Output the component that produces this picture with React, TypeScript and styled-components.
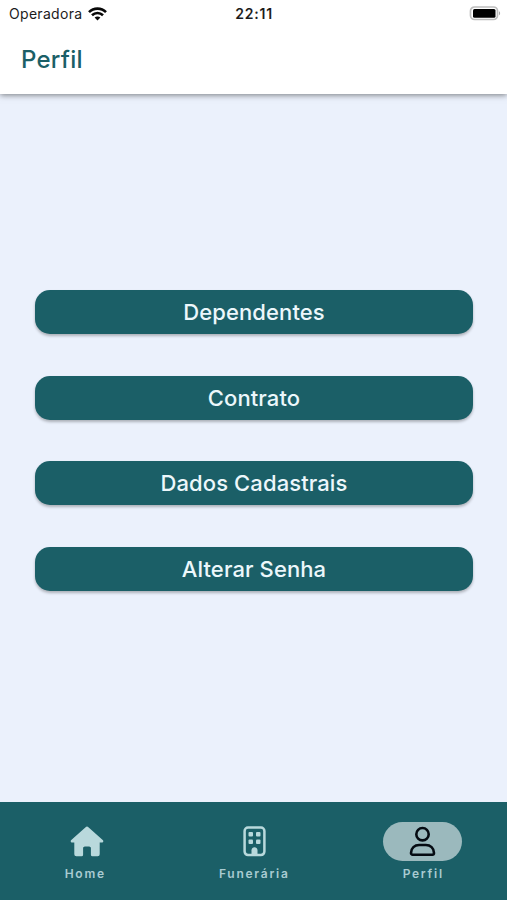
import React from 'react';
import styled, { createGlobalStyle } from 'styled-components';

const GlobalStyle = createGlobalStyle`
  * { box-sizing: border-box; }
  body { margin: 0; background: #ebf1fc; font-family: Inter, sans-serif; overflow: hidden; }
  svg { display: block; }
`;

const Screen = styled.div`
  display: flex;
  flex-direction: column;
  height: 900px;
  background: #ebf1fc;
`;

const Header = styled.header`
  height: 94px;
  background: #fff;
  box-shadow: 0 1px 6px rgba(0, 0, 0, 0.5);
`;

const StatusBar = styled.div`
  display: grid;
  grid-template-columns: 1fr auto 1fr;
  align-items: center;
  height: 27px;
  padding: 0 6px 0 9px;
  color: #1c1c1c;
`;

const Carrier = styled.div`
  display: flex;
  align-items: center;
  gap: 6px;
  font-size: 14px;
  line-height: 18px;
  letter-spacing: 0.3px;
`;

const Clock = styled.time`
  margin-left: -2px;
  font-size: 14px;
  font-weight: 600;
  line-height: 18px;
  letter-spacing: 0.8px;
`;

const Battery = styled.svg`
  justify-self: end;
`;

const Title = styled.h1`
  margin: 17px 0 0 21px;
  color: #1b5f67;
  font-size: 24px;
  font-weight: 450;
  line-height: 32px;
  letter-spacing: 0.25px;
`;

const Menu = styled.main`
  flex: 1;
  display: flex;
  flex-direction: column;
  gap: 41.6px;
  padding: 196px 34px 0 35px;
`;

const MenuButton = styled.button`
  height: 44px;
  flex: none;
  padding: 0;
  border: 0;
  border-radius: 15px;
  background: #1b5f67;
  box-shadow: 0 2px 3px rgba(0, 0, 0, 0.27);
  color: #ecf7fb;
  font-family: inherit;
  font-size: 22px;
  font-weight: 450;
  line-height: 44px;
  letter-spacing: 0.1px;
`;

const TabBar = styled.nav`
  display: grid;
  grid-template-columns: repeat(3, 1fr);
  height: 98px;
  padding-top: 20px;
  background: #1b5f67;
`;

const Tab = styled.div`
  display: flex;
  flex-direction: column;
  align-items: center;
  gap: 5px;
`;

const TabIcon = styled.div<{ $active?: boolean; $shift?: number }>`
  display: flex;
  align-items: center;
  justify-content: center;
  width: 79px;
  height: 39px;
  padding-left: ${({ $shift = 0 }) => $shift}px;
  border-radius: 20px;
  background: ${({ $active }) => ($active ? '#9bb9bd' : 'transparent')};
  color: ${({ $active }) => ($active ? '#050b12' : '#b9d9dc')};
`;

const TabLabel = styled.span`
  padding-left: 1.5px;
  color: #a9cbd2;
  font-size: 12px;
  font-weight: 600;
  line-height: 15px;
  letter-spacing: 1.75px;
`;

const WifiIcon = () => (
  <svg width="19" height="14" viewBox="0 0 19 14" fill="none" stroke="#080808" strokeWidth="2.6">
    <path d="M1 5.1C5.7.4 13.3.4 18 5.1" />
    <path d="M4 8.3c3.1-3 7.9-3 11 0" />
    <path d="m9.5 13.5-2.9-2.9c1.6-1.6 4.2-1.6 5.8 0Z" fill="#080808" stroke="none" />
  </svg>
);

const HomeIcon = () => (
  <svg width="34" height="31" viewBox="0 0 34 31" fill="currentColor">
    <path d="M15.6 1.2a2.1 2.1 0 0 1 2.8 0l14.3 12.8c1.2 1.1.5 2.5-1 2.5H29.700v11.800a2 2 0 0 1-2 2h-5.300a1.500 1.500 0 0 1-1.500-1.500v-6.500c0-1.100-.7-1.800-1.800-1.800h-4.200c-1.100 0-1.800.7-1.800 1.800v6.500a1.500 1.500 0 0 1-1.500 1.500H6.300a2 2 0 0 1-2-2V16.500H2.300c-1.500 0-2.200-1.400-1-2.500Z" />
  </svg>
);

const BuildingIcon = () => (
  <svg width="23" height="31" viewBox="0 0 23 31" fill="currentColor">
    <rect x="1.6" y="1.6" width="19.8" height="27.4" rx="3.4" fill="none" stroke="currentColor" strokeWidth="2.5" />
    <rect x="5.5" y="6" width="4.5" height="4.5" rx="1" />
    <rect x="13" y="6" width="4.5" height="4.5" rx="1" />
    <rect x="5.5" y="13.4" width="4.5" height="4.5" rx="1" />
    <rect x="13" y="13.4" width="4.5" height="4.5" rx="1" />
    <path d="M8.5 29v-4.6c0-4.3 6-4.3 6 0V29Z" />
  </svg>
);

const PersonIcon = () => (
  <svg width="27" height="31" viewBox="0 0 27 31" fill="none" stroke="currentColor" strokeWidth="2.6">
    <circle cx="13.5" cy="8.2" r="6.2" />
    <path d="M2 27c0-5.1 3.7-8 8.1-8h6.8c4.4 0 8.1 2.9 8.1 8 0 1-.7 1.7-1.6 1.7H3.6C2.7 28.7 2 28 2 27Z" />
  </svg>
);

export default function App() {
  return (
    <>
      <GlobalStyle />
      <Screen>
        <Header>
          <StatusBar>
            <Carrier>Operadora <WifiIcon /></Carrier>
            <Clock>22:11</Clock>
            <Battery width="32" height="15" viewBox="0 0 32 15">
              <rect x="1.5" y="1" width="27" height="12.5" rx="4" fill="#fff" stroke="#bdbdbd" strokeWidth="1.7" />
              <rect x="4" y="3" width="22.5" height="8.7" rx="1.5" fill="#000" />
              <path d="M30 5.2c1.5.6 1.5 3.5 0 4.1Z" fill="#aaa" />
            </Battery>
          </StatusBar>
          <Title>Perfil</Title>
        </Header>
        <Menu>
          <MenuButton>Dependentes</MenuButton>
          <MenuButton>Contrato</MenuButton>
          <MenuButton>Dados Cadastrais</MenuButton>
          <MenuButton>Alterar Senha</MenuButton>
        </Menu>
        <TabBar>
          <Tab>
            <TabIcon $shift={5}><HomeIcon /></TabIcon>
            <TabLabel>Home</TabLabel>
          </Tab>
          <Tab>
            <TabIcon $shift={1}><BuildingIcon /></TabIcon>
            <TabLabel>Funerária</TabLabel>
          </Tab>
          <Tab>
            <TabIcon $active><PersonIcon /></TabIcon>
            <TabLabel>Perfil</TabLabel>
          </Tab>
        </TabBar>
      </Screen>
    </>
  );
}
